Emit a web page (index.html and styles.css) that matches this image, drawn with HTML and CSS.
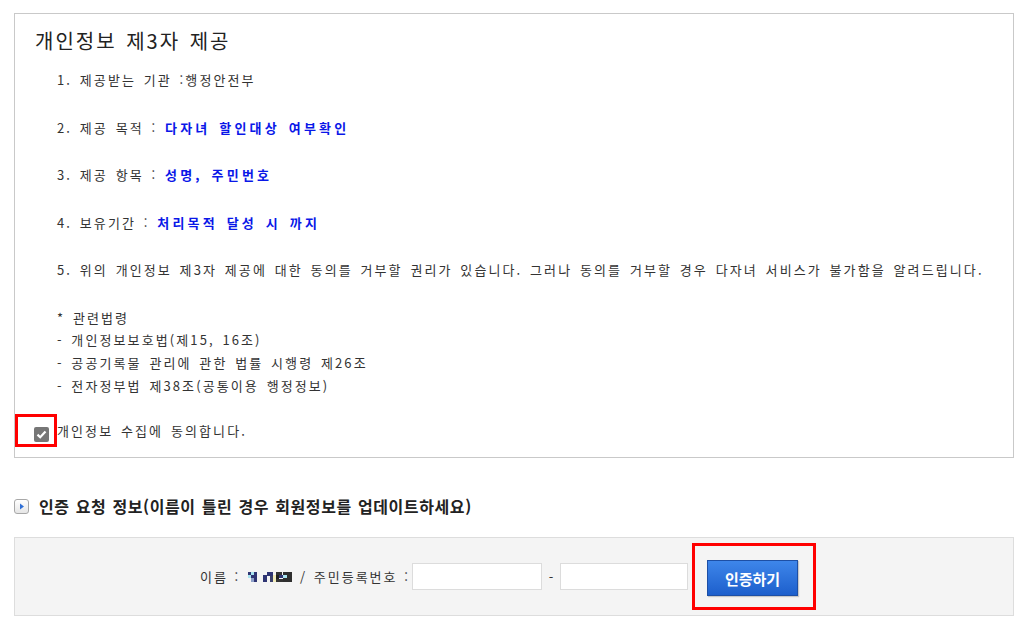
FILE: index.html
```html
<!DOCTYPE html>
<html lang="ko">
<head>
<meta charset="utf-8">
<link rel="stylesheet" href="styles.css">
</head>
<body>
<div class="page">
  <div class="agree-box">
    <h2 class="agree-title">개인정보 제3자 제공</h2>
    <ul class="items">
      <li class="item">1. 제공받는 기관 :행정안전부</li>
      <li class="item">2. 제공 목적 : <b class="hl">다자녀 할인대상 여부확인</b></li>
      <li class="item">3. 제공 항목 : <b class="hl">성명, 주민번호</b></li>
      <li class="item">4. 보유기간 : <b class="hl">처리목적 달성 시 까지</b></li>
      <li class="item">5. 위의 개인정보 제3자 제공에 대한 동의를 거부할 권리가 있습니다. 그러나 동의를 거부할 경우 다자녀 서비스가 불가함을 알려드립니다.</li>
    </ul>
    <div class="laws">
      <p>* 관련법령</p>
      <p>- 개인정보보호법(제15, 16조)</p>
      <p>- 공공기록물 관리에 관한 법률 시행령 제26조</p>
      <p>- 전자정부법 제38조(공통이용 행정정보)</p>
    </div>
    <label class="consent">
      <span class="hilite-check"><span class="fake-check"><svg width="11" height="9" viewBox="0 0 11 9"><path d="M1.5 4.6 L4.2 7.2 L9.5 1.5" fill="none" stroke="#fff" stroke-width="2.2"/></svg></span></span>
      <span class="consent-text">개인정보 수집에 동의합니다.</span>
    </label>
  </div>

  <h3 class="sec-title">
    <span class="sec-icon"><svg width="6" height="7" viewBox="0 0 6 7"><path d="M1 0.5 L5 3.5 L1 6.5 Z" fill="#2f6fd6"/></svg></span>
    <span>인증 요청 정보(이름이 틀린 경우 회원정보를 업데이트하세요)</span>
  </h3>

  <div class="auth-box">
    <span class="lbl lbl-name">이름 :</span>
    <svg class="mosaic" width="44" height="10" viewBox="0 0 44 10">
      <rect x="0" y="0" width="3" height="3" fill="#2f3573"/>
      <rect x="0" y="3" width="3" height="3" fill="#a9e4ef"/>
      <rect x="3" y="0" width="3" height="3" fill="#a9e4ef"/>
      <rect x="3" y="3" width="3" height="3" fill="#2f3573"/>
      <rect x="6" y="0" width="3" height="10" fill="#2f3573"/>
      <rect x="3" y="6" width="3" height="4" fill="#8fa0c8"/>
      <rect x="15" y="3" width="4" height="7" fill="#2f3573"/>
      <rect x="19" y="0" width="6" height="4" fill="#2f3573"/>
      <rect x="22" y="4" width="3" height="6" fill="#3a3f6a"/>
      <rect x="25" y="3" width="3" height="7" fill="#f2ecb8"/>
      <rect x="28" y="0" width="6" height="3" fill="#333"/>
      <rect x="28" y="3" width="3" height="4" fill="#222"/>
      <rect x="31" y="3" width="4" height="3" fill="#2f3573"/>
      <rect x="28" y="7" width="7" height="3" fill="#333"/>
      <rect x="35" y="0" width="9" height="10" fill="#2f2f2f"/>
      <rect x="35" y="3" width="4" height="3" fill="#a9e4ef"/>
    </svg>
    <span class="lbl lbl-jumin">/ 주민등록번호 :</span>
    <input class="jumin" type="text">
    <span class="dash">-</span>
    <input class="jumin jumin2" type="text">
    <span class="hilite-btn"><button class="btn-auth" type="button">인증하기</button></span>
  </div>
</div>
</body>
</html>
```

FILE: styles.css
```css
* { box-sizing: border-box; }
html, body { margin: 0; padding: 0; background: #fff; }
body {
  font-family: "Noto Sans CJK KR", "Noto Sans", sans-serif;
  color: #333;
  font-size: 13px;
}
.page {
  padding: 13px 0 0 14px;
  width: 1014px;
}
.agree-box {
  width: 1000px;
  height: 445px;
  border: 1px solid #c9c9c9;
  padding: 14px 20px 0 20px;
}
.agree-title {
  margin: 0;
  font-size: 20px;
  font-weight: normal;
  line-height: 26px;
  color: #222;
  letter-spacing: 2px;
  word-spacing: 2px;
}
.items {
  list-style: none;
  margin: 16px 0 0 22px;
  padding: 0;
}
.item {
  line-height: 20px;
  height: 47.5px;
  color: #333;
  letter-spacing: 2.1px;
  word-spacing: 2px;
}
.hl {
  color: #0a17e8;
  font-weight: bold;
  letter-spacing: 3.2px;
  word-spacing: 2px;
}
.laws {
  margin: -1px 0 0 22px;
}
.laws p {
  margin: 0;
  line-height: 22.7px;
  letter-spacing: 2.1px;
  word-spacing: 2px;
}
.consent {
  display: flex;
  align-items: center;
  margin: 17px 0 0 -20px;
}
.hilite-check {
  display: flex;
  align-items: flex-start;
  width: 42px;
  height: 33px;
  border: 3px solid #ff0000;
  padding: 10px 0 0 16px;
}
.fake-check {
  display: flex;
  align-items: center;
  justify-content: center;
  width: 15px;
  height: 15px;
  border-radius: 2px;
  background: #767676;
}
.consent-text {
  letter-spacing: 2.1px;
  word-spacing: 2px;
}
.sec-title {
  display: flex;
  align-items: center;
  margin: 38px 0 0 0;
  font-size: 16px;
  font-weight: bold;
  color: #222;
  line-height: 20px;
  letter-spacing: 0.6px;
  word-spacing: 1px;
}
.sec-icon {
  display: flex;
  align-items: center;
  justify-content: center;
  width: 15px;
  height: 15px;
  border: 1px solid #a8a8a8;
  border-radius: 3px;
  background: linear-gradient(#ffffff, #e6e6e6);
  margin-right: 10px;
}
.auth-box {
  display: flex;
  align-items: center;
  width: 1000px;
  height: 79px;
  margin-top: 21px;
  background: #f4f4f4;
  border: 1px solid #dddddd;
  padding-left: 185px;
}
.lbl {
  color: #333;
  letter-spacing: 2px;
  word-spacing: 1px;
  white-space: nowrap;
}
.lbl-name { width: 48px; }
.mosaic { margin: 0 8px 0 0; flex: none; }
.lbl-jumin { width: 112px; }
.jumin {
  width: 130px;
  height: 27px;
  border: 1px solid #dcdcdc;
  background: #fff;
  padding: 0;
  flex: none;
}
.dash { width: 18px; text-align: center; }
.jumin2 { width: 128px; }
.hilite-btn {
  display: flex;
  align-items: flex-start;
  width: 124px;
  height: 67px;
  border: 3px solid #ff0000;
  margin-left: 4px;
  padding: 14px 0 0 12px;
  flex: none;
}
.btn-auth {
  width: 91px;
  height: 36px;
  border: 1px solid #1d4fa5;
  background: linear-gradient(#3e86ea, #1d5fcc);
  color: #fff;
  font-family: "Noto Sans CJK KR", sans-serif;
  font-size: 15px;
  font-weight: bold;
  box-shadow: 1px 1px 1px rgba(0,0,0,0.18);
  padding: 0;
}
```
